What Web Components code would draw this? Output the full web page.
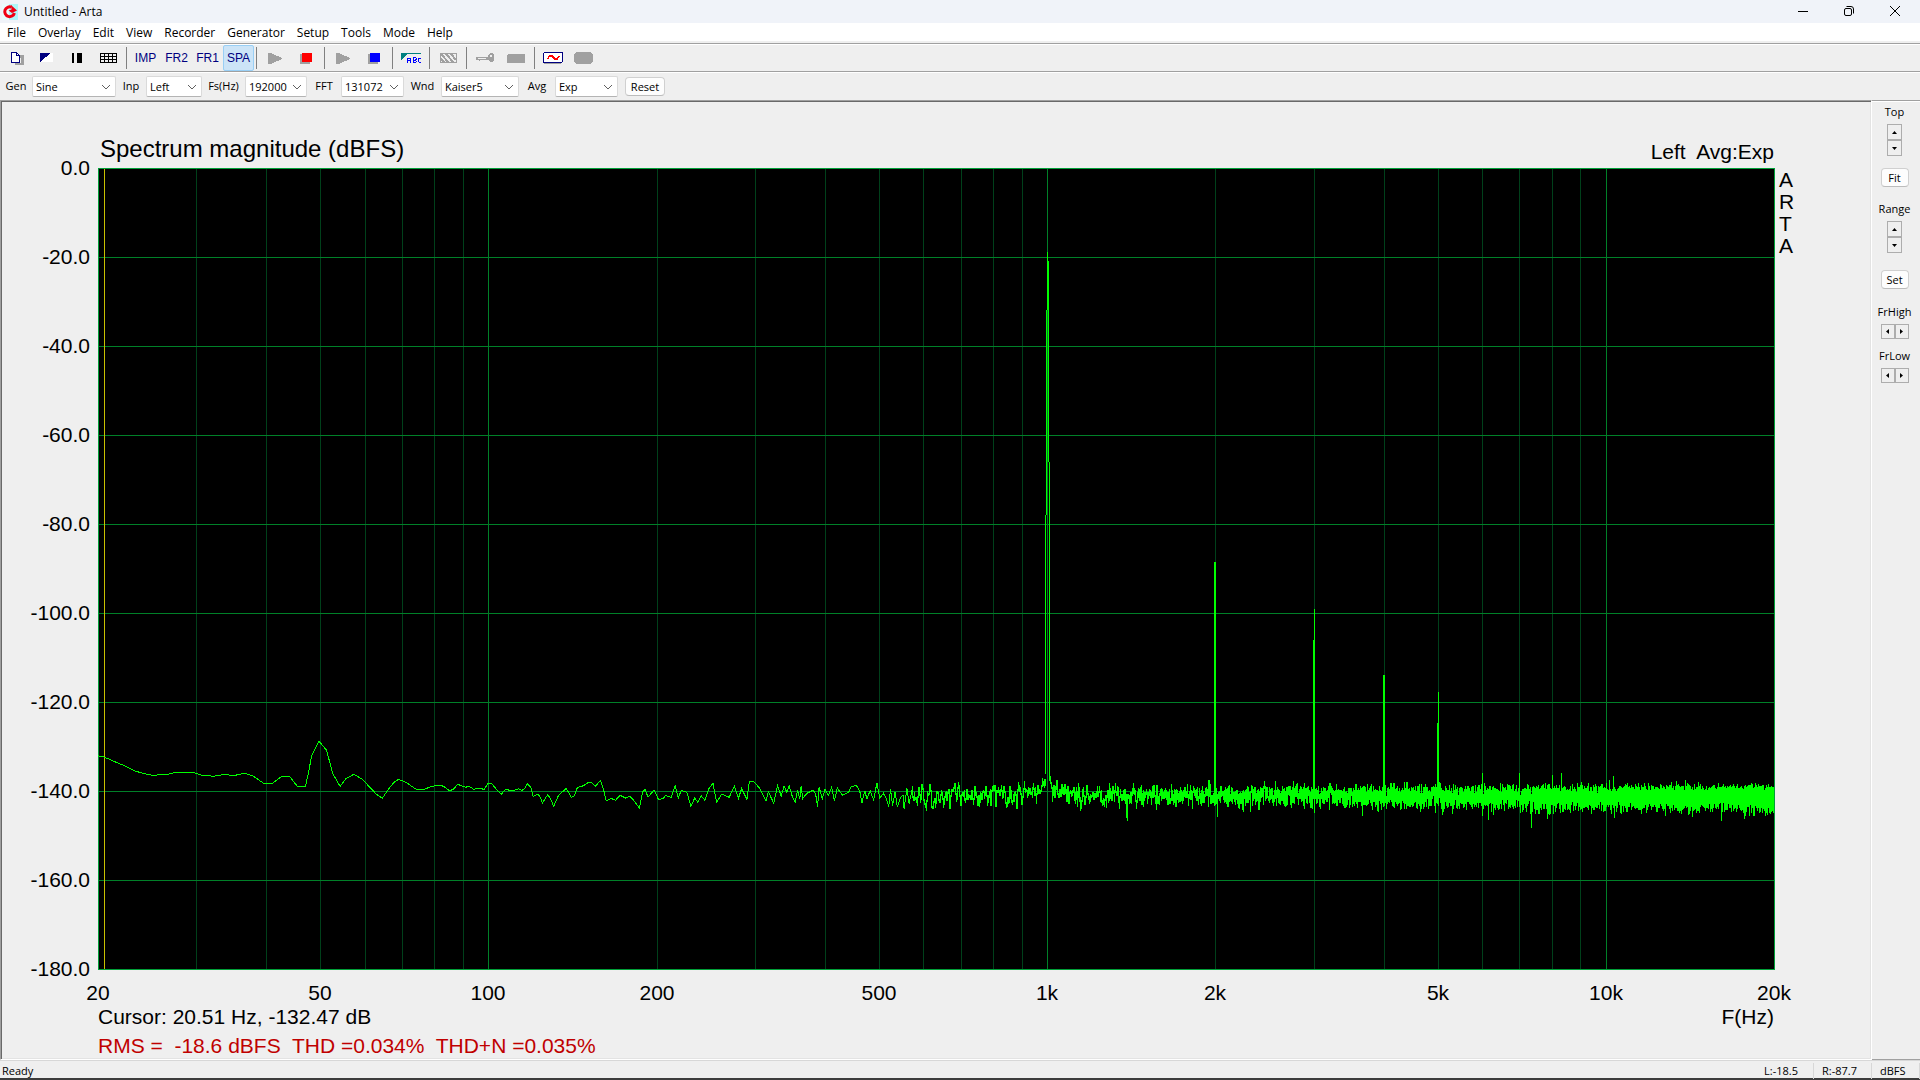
<!DOCTYPE html>
<html lang="en">
<head>
<meta charset="utf-8">
<title>Untitled - Arta</title>
<style>
html, body { height: 100%; margin: 0; }
body { background: #efefef; color: #000; font-family: "Open Sans", "Noto Sans", sans-serif; font-size: 11px; overflow: hidden; }
</style>
</head>
<body>
<arta-app></arta-app>
<script>
const define = (name, html, init) => {
  const tpl = document.createElement('template');
  tpl.innerHTML = html;
  customElements.define(name, class extends HTMLElement {
    connectedCallback() {
      if (this.shadowRoot) return;
      this.attachShadow({ mode: 'open' }).append(tpl.content.cloneNode(true));
      if (init) init.call(this, this.shadowRoot);
    }
  });
};

/* ---------- title bar ---------- */
define('arta-titlebar', `
<style>
:host { display: flex; align-items: center; height: 23px; background: #f0f3f9; font-size: 12px; flex: none; }
.logo { width: 16px; height: 16px; margin: 0 6px 0 2px; }
span { flex: 1; line-height: 16px; }
button { width: 46px; height: 23px; padding: 0 0 2px; border: 0; background: none; display: grid; place-items: center; }
nav { display: flex; padding-right: 2px; }
svg { display: block; fill: none; stroke: #000; }
</style>
<svg class="logo" viewBox="0 0 16 16"><path stroke="none" fill="#aef6f8" d="M0 0h16v16H0z"/><path stroke="none" fill="#e9fbfd" d="M0 0h7v16H0z"/><path stroke="#f00014" stroke-width="3" d="M9.500 3.200A4.900 4.900 0 1 0 12.400 9"/><path stroke="none" fill="#f00014" d="M9 1l6 5.500-5 2.500-3.500-2.500 3-1z"/></svg>
<span><slot></slot></span>
<nav>
<button aria-label="Minimize"><svg width="12" height="12"><path d="M1 6.500h10"/></svg></button>
<button aria-label="Restore"><svg width="12" height="12"><rect x="1.500" y="3.500" width="7" height="7" rx="1.500"/><path d="M3.500 1.500H8a2.500 2.500 0 0 1 2.500 2.500v4.500"/></svg></button>
<button aria-label="Close"><svg width="12" height="12"><path d="M1 1l10 10M11 1L1 11"/></svg></button>
</nav>`);

/* ---------- menu bar ---------- */
define('arta-menu', `
<style>
:host { display: flex; align-items: center; box-sizing: border-box; height: 18px; background: #fff; padding: 2px 0 0 1px; flex: none; }
button { border: 0; background: none; font: 12px/16px "Open Sans", sans-serif; padding: 0 6px; color: #000; }
</style>`, function (root) {
  for (const t of this.getAttribute('items').split(',')) {
    const b = document.createElement('button');
    b.textContent = t;
    root.append(b);
  }
});

/* ---------- tool button ---------- */
const ICONS = {
  'New': '<path fill="#a0a0a0" d="M17 5h7v10H15v-2h6V8h-4z"/><path fill="#fff" stroke="#000080" d="M11.500 2.500h5l3 3v7h-8z"/><path stroke="#000080" fill="none" d="M16.500 2.500v3h3"/>',
  'Overlay': '<path fill="#fff" d="M9 3h13v9H9z"/><path fill="#000080" d="M9 3h11L9 12z"/>',
  'Pause': '<path d="M10 3h2v10h-2zM15 3h5v10h-5z"/>',
  'Table': '<path stroke="#000" fill="none" d="M7.500 3.500h16v9h-16zM7 6.500h17M7 9.500h17M11.500 3v10M15.500 3v10M19.500 3v10"/>',
  'Play': '<path fill="#a0a0a0" d="M8 3h3l11 5v1l-11 5H8z"/>',
  'Stop red': '<path fill="#a0a0a0" d="M9 4h10v10H9z"/><path fill="#f00" d="M11 3h10v9H11z"/>',
  'Stop blue': '<path fill="#a0a0a0" d="M9 4h10v10H9z"/><path fill="#00f" d="M11 3h10v9H11z"/>',
  'Text': '<path fill="#008080" d="M5 3h20v1H11L5 11z"/><path fill="none" stroke="#00f" d="M11.500 13V9l1-1h1l1 1v4M12 10.500h2M17.500 7.500v5h2l1-1-1-1.500 1-1-1-1.500zM17.500 10h2M24.500 8h-1l-1.500 1v2.500l1.500 1h1.500"/>',
  'Hatch': '<path fill="none" stroke="#a0a0a0" d="M7.500 3.500h16v9h-16z"/><path fill="none" stroke="#a0a0a0" stroke-width="2" d="M8 4l8 9M13 4l8 9M18 4l5 6M8 9l4 4"/>',
  'Key': '<path fill="#a0a0a0" d="M6 7h12l1-3 2-1h2l1 2v5l-2 2h-2l-2-2H10l-1 1-1-1H6z"/><path fill="#efefef" d="M20 5h2v2h-2zM8 8h8v1H8z"/>',
  'Device': '<path fill="#a0a0a0" d="M6 5l1-1h16l1 1v8H6z"/>',
  'Signal': '<path fill="#a0a0a0" d="M5 4h18v10H6l-1-1z"/><rect x="5.500" y="2.500" width="19" height="10" rx="1.500" fill="#fff" stroke="#000080"/><path fill="none" stroke="#f00" stroke-width="1.500" d="M9.500 9l2-3h2.500l3 3h2l2-3"/>',
  'Record': '<rect x="5" y="2" width="19" height="12" rx="4" fill="#a0a0a0"/>'
};
define('tool-button', `
<style>
:host { display: block; }
button { width: 31px; height: 26px; padding: 0; border: 1px solid transparent; border-radius: 2px; background: none; color: #000080;
  font: 12px/24px "Liberation Sans", Arial, sans-serif; display: grid; place-items: center; }
:host([pressed]) button { background: #cce4f7; border-color: #99cff5; }
svg { display: block; shape-rendering: crispEdges; }
</style>
<button><slot></slot></button>`, function (root) {
  const name = this.getAttribute('icon');
  if (!name) return;
  const b = root.querySelector('button');
  b.setAttribute('aria-label', name);
  b.innerHTML = '<svg width="29" height="16" viewBox="1 0 29 16">' + ICONS[name] + '</svg>';
});

define('tool-separator', `
<style>:host { display: block; width: 1px; height: 22px; margin: 0 3px 0 2px; background: #808080; }</style>`);

define('arta-bar', `
<style>
:host { display: flex; align-items: center; height: 26px; flex: none; border-top: 1px solid #a0a0a0; box-shadow: inset 0 1px #fff; padding-top: 1px; }
:host([tall]) { height: 27px; }
</style>
<slot></slot>`);

/* ---------- label + drop-down ---------- */
define('arta-field', `
<style>
:host { display: flex; align-items: center; }
label { width: var(--label); text-align: center; line-height: 20px; padding-bottom: 2px; }
.box { display: grid; grid-template-columns: 1fr 18px; align-items: center; width: var(--box); height: 21px; box-sizing: border-box;
  border: 1px solid #dadada; border-bottom-color: #b4b4b4; border-radius: 2px; background: #fff; }
select { grid-area: 1 / 1 / 2 / 3; appearance: none; border: 0; background: none; margin: 0; padding: 0 0 0 3px; font: 11px/19px "Open Sans", sans-serif; color: #000; height: 19px; }
svg { grid-area: 1 / 2; justify-self: center; pointer-events: none; fill: none; stroke: #606060; }
</style>
<label for="s"></label><div class="box"><select id="s"><option></option></select><svg width="10" height="6"><path d="M1 1l4 4 4-4"/></svg></div>`, function (root) {
  root.querySelector('label').textContent = this.getAttribute('label');
  root.querySelector('option').textContent = this.getAttribute('value');
});

define('push-button', `
<style>
:host { display: block; }
button { box-sizing: border-box; width: 100%; height: 19px; padding: 0; border: 1px solid #d0d0d0; border-bottom-color: #bcbcbc; border-radius: 4px; background: #fdfdfd; color: #000; font: 11px/16px "Open Sans", sans-serif; }
</style><button><slot></slot></button>`);

/* ---------- spinner ---------- */
define('spin-pair', `
<style>
:host { display: flex; flex-direction: column; width: 15px; }
:host([horizontal]) { flex-direction: row; width: 28px; }
button { flex: 1; box-sizing: border-box; height: 16px; min-height: 16px; padding: 0; border: 1px solid #adadad; background: #efefef; display: grid; place-items: center; }
:host([horizontal]) button { height: 15px; min-height: 15px; }
button:last-of-type svg { transform: rotate(180deg); }
:host([horizontal]) button:first-of-type svg { transform: rotate(-90deg); }
:host([horizontal]) button:last-of-type svg { transform: rotate(90deg); }
</style>
<button aria-label="Increase"><svg width="5" height="5"><path d="M0 4l2.500-3L5 4z"/></svg></button><button aria-label="Decrease"><svg width="5" height="5"><path d="M0 4l2.500-3L5 4z"/></svg></button>`);

/* ---------- right-hand control panel ---------- */
define('arta-panel', `
<style>
:host { display: block; width: 48px; box-sizing: border-box; border-top: 1px solid #a0a0a0; border-bottom: 1px solid #a0a0a0; box-shadow: inset 0 1px #fff; flex: none; padding: 4px 0 0 0; }
section { display: flex; flex-direction: column; align-items: center; padding-right: 3px; }
section + section { margin-top: 15px; }
span { line-height: 14px; margin-bottom: 5px; }
push-button { width: 28px; margin-top: 12px; }
section + section push-button { margin-top: 17px; }
section.h { margin-top: 16px; }
section.h + section.h { margin-top: 10px; }
</style>
<section><span>Top</span><spin-pair></spin-pair><push-button>Fit</push-button></section>
<section><span>Range</span><spin-pair></spin-pair><push-button>Set</push-button></section>
<section class="h"><span>FrHigh</span><spin-pair horizontal></spin-pair></section>
<section class="h"><span>FrLow</span><spin-pair horizontal></spin-pair></section>`);

/* ---------- spectrum chart ---------- */
/* Low-frequency trace: x in 1/2.8 px of a 1676 px axis (origin 51), y in 1/13.35 dB with -140 dB at 213. */
const LOW = [51,107,68,111,100,126,125,137,155,153,180,161,205,166,245,163,270,157,315,157,340,165,375,169,400,164,435,166,462,160,485,168,515,190,540,190,565,169,588,170,609,199,632,199,638,170,650,105,670,64,691,91,708,160,729,199,745,176,767,163,790,177,815,205,830,222,847,235,865,206,880,187,893,178,915,188,940,207,965,208,985,199,1012,196,1025,203,1035,213,1048,206,1058,193,1080,202,1090,199,1103,208,1115,205,1133,208,1143,190,1153,190,1167,209,1180,223,1192,208,1212,213,1228,206,1238,211,1246,206,1253,191,1263,202,1269,229,1282,223,1288,229,1296,249,1310,224,1318,236,1327,259,1340,227,1362,205,1376,232,1384,228,1393,203,1410,197,1425,187,1433,188,1443,199,1458,182,1468,215,1474,243,1487,235,1500,241,1513,226,1528,234,1540,229,1550,240,1567,264,1576,215,1583,208,1591,232,1608,210,1620,238,1633,236,1640,227,1656,232,1667,197,1676,234,1684,211,1700,217,1711,259,1722,233,1730,247,1740,227,1750,241,1762,205,1773,190,1783,246,1798,222,1818,232,1833,199,1844,235,1853,206,1868,238,1875,184,1888,186,1903,204,1921,243,1928,215,1943,250,1954,197,1964,228,1972,199,1980,217,1986,197,1994,226,2003,247,2010,210,2016,238,2020,197,2024,236,2036,220,2053,211,2060,220,2066,260,2070,202,2079,236,2087,207,2096,226,2105,202,2113,243,2121,204,2136,226,2153,217,2160,199,2175,197,2184,214,2190,250,2198,212,2204,237,2213,212,2223,240,2232,188,2240,234,2250,220,2258,235,2265,260,2270,208,2276,257,2283,215,2289,262,2298,232,2305,226,2308,268,2316,205,2322,252,2332,200];
const F_MIN = 20, F_MAX = 20000, DB_SPAN = 180, BIN = 192000 / 131072;
const HARMONICS = [[2000, -88.5], [3000, -99], [4000, -114], [5000, -117.8]];
const SPURS = [[6000, -136], [7000, -136], [8000, -136.4], [8330, -136], [10300, -136.6]];

define('spectrum-chart', `
<style>
:host { display: block; flex: 1; min-height: 0; overflow: visible; }
svg { display: block; overflow: visible; width: 100%; height: 100%; font: 21px "Liberation Sans", Arial, sans-serif; }
path, rect { shape-rendering: crispEdges; fill: none; }
</style>
<svg role="img" aria-label="Spectrum magnitude"></svg>`, function (root) {
  const svg = root.querySelector('svg');
  const draw = () => {
    const L = 96, T = 4, W = this.clientWidth - 192, H = this.clientHeight - 39;
    if (W < 50 || H < 50) return;
    const X = f => L + W * Math.log10(f / F_MIN) / Math.log10(F_MAX / F_MIN);
    const Y = db => T - H * db / DB_SPAN;
    const px = v => Math.round(v) + 0.5;
    let out = `<rect x="${L}" y="${T}" width="${W}" height="${H}" style="fill:#000"/>`;
    let minor = '', major = '', horiz = '';
    for (let d = 10; d < F_MAX; d *= 10)
      for (let k = 1; k < 10; k++) {
        const f = d * k;
        if (f <= F_MIN || f >= F_MAX) continue;
        const seg = `M${px(X(f))} ${T}v${H}`;
        if (k === 1) major += seg; else minor += seg;
      }
    for (let db = -20; db > -180; db -= 20) horiz += `M${L} ${px(Y(db))}h${W}`;
    out += `<path d="${minor}" stroke="#00401a"/><path d="${major}${horiz}" stroke="#008028"/>`;
    out += `<rect x="${L + 0.5}" y="${T + 0.5}" width="${W}" height="${H}" stroke="#00a038"/>`;
    out += `<path d="M${px(L + 6 * W / 1676)} ${T + 1}v${H - 1}" stroke="#c8c000"/>`;

    let low = '';
    let lastY = 0;
    for (let i = 0; i < LOW.length; i += 2) {
      lastY = Y(-140 - (LOW[i + 1] - 213) / 13.35);
      low += (i ? 'L' : 'M') + (L + (LOW[i] - 51) / 2.8 * W / 1676).toFixed(1) + ' ' + lastY.toFixed(1);
    }
    let seed = 20511;
    const rnd = () => (seed = (seed * 16807) % 2147483647) / 2147483647;
    const gauss = () => (rnd() + rnd() + rnd() + rnd() + rnd() + rnd() - 3) * 1.41;
    let cols = '', col = Math.floor(X(574)), lo = lastY, hi = lastY, prev = lastY, g0 = 0, g00 = 0;
    const centre = X(1000);
    for (let f = 575; f < F_MAX; f += BIN) {
      const g1 = gauss(), g = 0.65 * g1 + 0.65 * g0 + 0.35 * g00;
      g00 = g0;
      g0 = g1;
      const x = X(f), mean = -140.5 - 0.6 * Math.min(1, Math.log10(f / 575));
      const skirt = 3.500 * Math.exp(-Math.abs(x - centre) / 7);
      const y = Y(mean + skirt + 1.2 * g - 0.07 * g * g);
      if (Math.floor(x) !== col) {
        if (Math.abs(col - Math.floor(centre)) > 1)
          cols += `M${col + 0.5} ${Math.floor(lo)}V${Math.ceil(hi) + 1}`;
        col = Math.floor(x);
        lo = hi = prev;
      }
      lo = Math.min(lo, y);
      hi = Math.max(hi, y);
      prev = y;
    }
    cols += `M${col + 0.5} ${Math.floor(lo)}V${Math.ceil(hi)}`;

    const c = Math.round(centre);
    const bar = (dx, a, b) => `M${c + dx + 0.5} ${Math.round(Y(a))}V${Math.round(Y(b))}`;
    let peaks = bar(-2, -78, -136.2) + bar(-1, -32, -78) + bar(0, -18.9, -32) + bar(1, -21, -66) + bar(2, -66, -136.6);
    for (const [f, db] of HARMONICS) {
      const x = Math.round(X(f));
      peaks += `M${x + 0.5} ${Math.round(Y(db))}V${Y(-141)}M${x - 0.5} ${Math.round(Y(f === 3000 || f === 5000 ? db - 7 : db))}V${Y(-141)}`;
    }
    for (const [f, db] of SPURS) peaks += `M${px(X(f))} ${Math.round(Y(db))}V${Y(-141)}`;
    out += `<path d="${low}${cols}${peaks}" stroke="#0f0"/>`;

    for (let db = 0; db >= -180; db -= 20)
      out += `<text x="${L - 8}" y="${Math.round(Y(db)) + 7}" text-anchor="end">${db.toFixed(1)}</text>`;
    for (const [f, t] of [[20, '20'], [50, '50'], [100, '100'], [200, '200'], [500, '500'], [1000, '1k'], [2000, '2k'], [5000, '5k'], [10000, '10k'], [20000, '20k']])
      out += `<text x="${Math.round(X(f))}" y="${T + H + 31}" text-anchor="middle">${t}</text>`;
    [...'ARTA'].forEach((ch, i) => { out += `<text x="${L + W + 5}" y="${T + 19 + i * 22}">${ch}</text>`; });
    svg.innerHTML = out;
  };
  draw();
  new ResizeObserver(draw).observe(this);
});

define('spectrum-view', `
<style>
:host { display: flex; flex-direction: column; flex: 1; min-width: 0; box-sizing: border-box; padding: 1px;
  border: 1px solid #a0a0a0; border-right-color: #fff; border-bottom-color: #fff; box-shadow: inset 1px 1px #696969, inset -1px -1px #e3e3e3;
  font-family: "Liberation Sans", Arial, sans-serif; font-size: 21px; line-height: 26px; }
header { display: flex; justify-content: space-between; align-items: flex-end; height: 62px; padding: 0 96px 0 98px; flex: none; }
h1 { font-size: 24px; line-height: 28px; font-weight: 400; margin: 0; padding-bottom: 1px; }
span { white-space: pre; }
header span { line-height: 24px; }
footer { display: flex; flex-direction: column; gap: 4px; padding: 0 96px; flex: none; }
footer div { display: flex; justify-content: space-between; }
.rms { color: #c00000; line-height: 24px; }
</style>
<header><h1>Spectrum magnitude (dBFS)</h1><span>Left  Avg:Exp</span></header>
<spectrum-chart></spectrum-chart>
<footer><div><span>Cursor: 20.51 Hz, -132.47 dB</span><span>F(Hz)</span></div><span class="rms">RMS =  -18.6 dBFS  THD =0.034%  THD+N =0.035%</span></footer>`);

define('arta-status', `
<style>
:host { display: flex; align-items: center; height: 15px; flex: none; border-top: 1px solid #d7d7d7; border-bottom: 2px solid #3c3c3c; padding-top: 2px; font-size: 11px; line-height: 16px; }
span { box-sizing: border-box; width: 58px; padding-left: 8px; border-right: 1px solid #d7d7d7; }
span:first-of-type { flex: 1; padding-left: 2px; border: 0; }
span:last-of-type { width: 48px; }
</style><span>Ready</span><span>L:-18.5</span><span>R:-87.7</span><span>dBFS</span>`);

define('arta-app', `
<style>
:host { display: flex; flex-direction: column; height: 100vh; background: #efefef; }
main { display: flex; flex: 1; min-height: 0; }
.top { margin-top: 2px; }
.reset { width: 40px; margin-left: 7px; }
</style>
<arta-titlebar>Untitled - Arta</arta-titlebar>
<arta-menu items="File,Overlay,Edit,View,Recorder,Generator,Setup,Tools,Mode,Help"></arta-menu>
<arta-bar class="top">
<tool-button icon="New"></tool-button><tool-button icon="Overlay"></tool-button><tool-button icon="Pause"></tool-button><tool-button icon="Table"></tool-button><tool-separator></tool-separator>
<tool-button>IMP</tool-button><tool-button>FR2</tool-button><tool-button>FR1</tool-button><tool-button pressed>SPA</tool-button><tool-separator></tool-separator>
<tool-button icon="Play"></tool-button><tool-button icon="Stop red"></tool-button><tool-separator></tool-separator>
<tool-button icon="Play"></tool-button><tool-button icon="Stop blue"></tool-button><tool-separator></tool-separator>
<tool-button icon="Text"></tool-button><tool-separator></tool-separator>
<tool-button icon="Hatch"></tool-button><tool-separator></tool-separator>
<tool-button icon="Key"></tool-button><tool-button icon="Device"></tool-button><tool-separator></tool-separator>
<tool-button icon="Signal"></tool-button><tool-button icon="Record"></tool-button>
</arta-bar>
<arta-bar tall>
<arta-field label="Gen" value="Sine" style="--label:32px;--box:84px"></arta-field>
<arta-field label="Inp" value="Left" style="--label:30px;--box:56px"></arta-field>
<arta-field label="Fs(Hz)" value="192000" style="--label:43px;--box:62px"></arta-field>
<arta-field label="FFT" value="131072" style="--label:34px;--box:63px"></arta-field>
<arta-field label="Wnd" value="Kaiser5" style="--label:37px;--box:78px"></arta-field>
<arta-field label="Avg" value="Exp" style="--label:36px;--box:63px"></arta-field>
<push-button class="reset">Reset</push-button>
</arta-bar>
<main><spectrum-view></spectrum-view><arta-panel></arta-panel></main>
<arta-status></arta-status>`);
</script>
</body>
</html>
